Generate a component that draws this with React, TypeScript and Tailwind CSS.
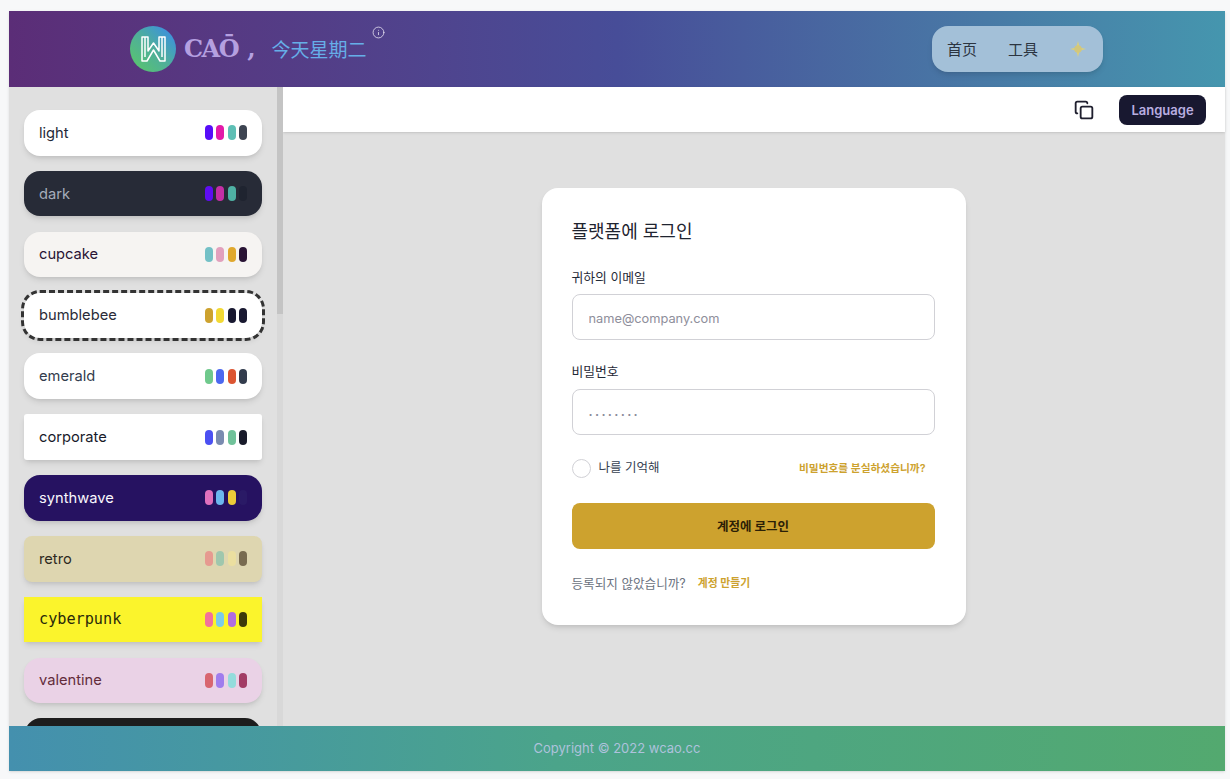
import { Copy, Info } from 'lucide-react';

const themes = [
  { name: 'light', card: 'bg-white text-[#1f2937] rounded-2xl', dots: ['bg-[#570df8]', 'bg-[#e31aa8]', 'bg-[#5ebfb5]', 'bg-[#3d4451]'] },
  { name: 'dark', card: 'bg-[#272b37] text-[#a6adbb] rounded-2xl', dots: ['bg-[#5f0df2]', 'bg-[#c52fa5]', 'bg-[#4fb1a4]', 'bg-[#1f2430]'] },
  { name: 'cupcake', card: 'bg-[#f6f4f2] text-[#291334] rounded-2xl', dots: ['bg-[#73c0c6]', 'bg-[#e2a0bd]', 'bg-[#e0a82e]', 'bg-[#291334]'] },
  { name: 'bumblebee', card: 'bg-white text-[#2b2b38] rounded-2xl outline-dashed outline-[3px] outline-offset-0 outline-[#333]', dots: ['bg-[#cda22e]', 'bg-[#f2d934]', 'bg-[#181830]', 'bg-[#181830]'] },
  { name: 'emerald', card: 'bg-white text-[#333c4d] rounded-2xl', dots: ['bg-[#6fc98c]', 'bg-[#4c68f0]', 'bg-[#dc5532]', 'bg-[#333c4d]'] },
  { name: 'corporate', card: 'bg-white text-[#181a2a] rounded-[3px]', dots: ['bg-[#4b50f2]', 'bg-[#7a8bb0]', 'bg-[#70c29a]', 'bg-[#181a2a]'] },
  { name: 'synthwave', card: 'bg-[#261261] text-[#f9f7fd] rounded-2xl', dots: ['bg-[#e070bd]', 'bg-[#6cb7ee]', 'bg-[#eccb38]', 'bg-[#2a1a66]'] },
  { name: 'retro', card: 'bg-[#ded6b0] text-[#2e2a1f] rounded-lg', dots: ['bg-[#e69a90]', 'bg-[#9fc7ad]', 'bg-[#ebdfa0]', 'bg-[#786b50]'] },
  { name: 'cyberpunk', card: 'bg-[#fbf42c] text-[#29290a] rounded-none', dots: ['bg-[#f2719b]', 'bg-[#7ccbe8]', 'bg-[#b06de0]', 'bg-[#3c3a0a]'] },
  { name: 'valentine', card: 'bg-[#ead2e6] text-[#632c3b] rounded-2xl', dots: ['bg-[#d8666f]', 'bg-[#a07ced]', 'bg-[#94dcdc]', 'bg-[#a23c65]'] },
];

const sans = 'font-[Inter,"Noto_Sans_CJK_KR",sans-serif]';

function Logo() {
  return (
    <div className="w-[46px] h-[46px] rounded-full bg-gradient-to-tr from-[#5cc85f] via-[#4fae9a] to-[#3f84ee] flex items-center justify-center">
      <svg width="25" height="26" viewBox="0 0 25 26" fill="none" stroke="white" strokeWidth="1.5" strokeLinejoin="round">
        <path d="M1 1H7V15L12.5 7L18 15V1H24V25H19L12.5 14L6 25H1Z" />
        <path d="M4 1V21" />
        <path d="M21 1V21" />
      </svg>
    </div>
  );
}

function Header() {
  return (
    <header className="h-[76px] shrink-0 flex items-center bg-gradient-to-r from-[#5b2d77] via-[#474d98] to-[#4596ae]">
      <div className="ml-[121px] flex items-center">
        <Logo />
        <span className="ml-2 text-[24px] font-bold text-[#b5a0e0] font-[DejaVu_Serif,serif] tracking-[-1.5px]">CAŌ</span>
        <span className="ml-[9px] text-[24px] font-bold text-[#b5a0e0] font-[DejaVu_Serif,serif]">,</span>
        <span className="ml-[16px] text-[19px] text-[#66aee8] font-['Noto_Sans_CJK_SC',sans-serif]">今天星期二</span>
        <Info size={13} className="text-[#e5e0f0] ml-[5px] -mt-[33px]" strokeWidth={1.5} />
      </div>
      <nav className="ml-auto mr-[122px] w-[171px] h-[46px] rounded-2xl bg-[#a3c0d8] shadow-md flex items-center pl-[15px] text-[#2b3440] text-[15px] font-['Noto_Sans_CJK_SC',sans-serif]">
        <span>首页</span>
        <span className="ml-[31px]">工具</span>
        <svg className="ml-[32px] blur-[0.7px]" width="16" height="16" viewBox="0 0 16 16" fill="#e6d36a" opacity="0.9">
          <path d="M8 0 L9.6 6.4 L16 8 L9.6 9.6 L8 16 L6.4 9.6 L0 8 L6.4 6.4 Z" />
          <circle cx="8" cy="8" r="3.8" fill="#d8c873" />
        </svg>
      </nav>
    </header>
  );
}

function ThemeCard({ t }: { t: (typeof themes)[number] }) {
  return (
    <div className={`w-[238px] h-[45.6px] shrink-0 flex items-center justify-between pl-[15px] pr-[15px] shadow-md text-[14.7px] ${t.card}`}>
      <span className={t.name === 'cyberpunk' ? "font-['DejaVu_Sans_Mono',monospace] text-[15.2px]" : ''}>{t.name}</span>
      <div className="flex gap-[3.1px]">
        {t.dots.map((d, i) => (
          <div key={i} className={`w-[8.2px] h-[15px] rounded-full ${d}`} />
        ))}
      </div>
    </div>
  );
}

function Sidebar() {
  return (
    <aside className="relative w-[274px] shrink-0 bg-[#e0e0e0] overflow-hidden">
      <div className="pt-[23px] pl-[15px] flex flex-col gap-[15.25px]">
        {themes.map((t) => (
          <ThemeCard key={t.name} t={t} />
        ))}
        <div className="w-[236px] h-[46px] shrink-0 ml-px rounded-2xl bg-[#1d1d1d]" />
      </div>
      {/* scrollbar */}
      <div className="absolute top-0 right-0 bottom-0 w-[6px] bg-[#d8d8d8]">
        <div className="h-[227px] bg-[#c4c4c4]" />
      </div>
    </aside>
  );
}

function LoginCard() {
  return (
    <div className="w-[424px] h-[437px] bg-white rounded-2xl shadow-md pl-[30px] pr-[31px] pt-[31px] text-[#1f2937]">
      <h1 className="text-[18px] leading-[26px] font-normal text-[#1f2430]">플랫폼에 로그인</h1>
      <label className="block mt-[24px] text-[12.8px] leading-[18px] font-normal">귀하의 이메일</label>
      <input
        placeholder="name@company.com"
        className="block mt-[7px] w-full h-[46px] rounded-lg border border-[#d1d1d6] pl-[16px] pr-[15px] pt-[2px] text-[12.8px] placeholder:text-[#8e8e9b]"
      />
      <label className="block mt-[23px] text-[12.8px] leading-[18px] font-normal">비밀번호</label>
      <input
        type="text"
        placeholder="········"
        className="block mt-[8px] w-full h-[46px] rounded-lg border border-[#d1d1d6] pl-[16px] pr-[15px] pt-[4px] text-[13px] font-semibold tracking-[2.3px] placeholder:text-[#8a8a98]"
      />
      <div className="mt-[24px] flex items-center">
        <div className="w-[19px] h-[19px] rounded-full border border-[#d1d1d6] bg-white" />
        <span className="ml-[8px] text-[12.5px] font-normal text-[#374151]">나를 기억해</span>
        <a className="ml-auto mr-[9px] pt-[2px] text-[10.7px] font-semibold text-[#cda22e]">비밀번호를 분실하셨습니까?</a>
      </div>
      <button className="mt-[25px] w-full h-[46px] rounded-lg bg-[#cda22e] text-[#2b2006] text-[12.5px] font-semibold pt-[2px]">
        계정에 로그인
      </button>
      <div className="mt-[26px] flex items-center text-[12.6px] text-[#6b7280]">
        <span>등록되지 않았습니까?</span>
        <a className="ml-[12px] text-[10.8px] font-semibold text-[#cda22e]">계정 만들기</a>
      </div>
    </div>
  );
}

export default function App() {
  return (
    <div className={`h-screen overflow-hidden bg-[#f7f8f9] pt-[11px] pl-[9px] pr-[5px] pb-[8px] ${sans}`}>
      <div className="h-full flex flex-col shadow-sm">
        <Header />
        <div className="flex-1 min-h-0 flex bg-[#e0e0e0]">
          <Sidebar />
          <main className="flex-1 min-w-0 flex flex-col">
            <div className="h-[45px] shrink-0 bg-white shadow flex items-center justify-end pr-[19px]">
              <Copy size={20} className="text-[#1f1f2e] mr-[25px]" strokeWidth={2.2} />
              <button className="w-[87px] h-[30px] rounded-lg bg-[#181830] text-[#b9aee0] text-[13px] font-semibold pt-[2px]">
                Language
              </button>
            </div>
            <div className="flex justify-center pt-[56px] pr-[1px]">
              <LoginCard />
            </div>
          </main>
        </div>
        <footer className="h-[45px] shrink-0 flex items-center justify-center bg-gradient-to-r from-[#4490ae] via-[#4ba48a] via-45% to-[#53a96f] text-[13px] text-[#aec2dc]">
          Copyright © 2022 wcao.cc
        </footer>
      </div>
    </div>
  );
}
